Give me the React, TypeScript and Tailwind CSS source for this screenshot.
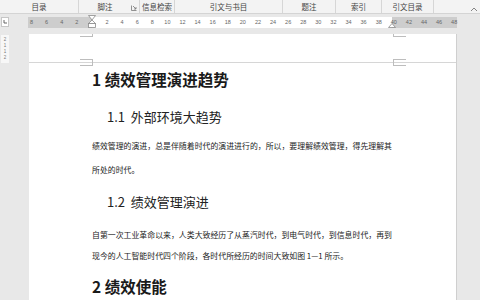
import React from 'react';

const rulerNums = ['8', '6', '4', '2', '', '2', '4', '6', '8', '10', '12', '14', '16', '18', '20', '22', '24', '26', '28', '30', '32', '34', '36', '38', '40', '42', '44', '46', '48'];

const groups = [
    { label: '目录', w: 'w-[79px]' },
    { label: '脚注', w: 'w-[61px]', launcher: true },
    { label: '信息检索', w: 'w-[35px]' },
    { label: '引文与书目', w: 'w-[108px]' },
    { label: '题注', w: 'w-[53px]' },
    { label: '索引', w: 'w-[46px]' },
    { label: '引文目录', w: 'w-[52px]' },
];

export default function App() {
    return (
        <div className="w-[480px] h-[300px] overflow-hidden bg-[#e8e8e8] font-['Noto_Sans_CJK_SC',sans-serif] flex flex-col">
            {/* ribbon group labels */}
            <div className="h-[14px] shrink-0 flex bg-[#f3f3f3] border-b border-[#d4d4d4] text-[7.5px] leading-[13px] text-[#444]">
                {groups.map((g) => (
                    <div key={g.label} className={`${g.w} shrink-0 flex items-center border-r border-[#d6d6d6]`}>
                        <span className="flex-1 text-center">{g.label}</span>
                        {g.launcher && (
                            <svg width="6" height="6" viewBox="0 0 6 6" className="mr-[2px] mt-[2px]">
                                <path d="M0.5 0.5V5.5H5.5" fill="none" stroke="#777" strokeWidth="0.8" />
                                <path d="M2 1L5 4M5 2V4H3" fill="none" stroke="#777" strokeWidth="0.8" />
                            </svg>
                        )}
                    </div>
                ))}
                <div className="flex-1 flex justify-end items-end pr-[2px] pb-[1px]">
                    <svg width="8" height="5" viewBox="0 0 8 5">
                        <path d="M1 4L4 1L7 4" fill="none" stroke="#777" strokeWidth="0.9" />
                    </svg>
                </div>
            </div>

            {/* ruler row */}
            <div className="h-[20px] shrink-0 flex items-start pt-[3px]">
                <div className="ml-[1px] w-[8px] h-[10px] bg-white border border-[#c6c6c6] flex items-center justify-center">
                    <svg width="4" height="4" viewBox="0 0 4 4">
                        <path d="M1 0V3H4" fill="none" stroke="#555" strokeWidth="0.9" />
                    </svg>
                </div>
                <div className="ml-[19px] w-[429px] h-[11px] relative bg-[linear-gradient(to_right,#cdcdcd_64px,#ffffff_64px,#ffffff_364px,#cdcdcd_364px)]">
                    <div className="flex -ml-[4px] font-['Liberation_Sans',sans-serif] text-[5.5px] leading-[11px] text-[#666]">
                        {rulerNums.map((n, i) => (
                            <span key={i} className="w-[15.1px] shrink-0 text-center">
                                {n}
                            </span>
                        ))}
                    </div>
                    {/* first line / hanging indent marker */}
                    <svg className="absolute left-[60px] -top-[2px]" width="8" height="13" viewBox="0 0 8 13">
                        <path d="M0.5 0.5H7.5L4 5Z" fill="#fff" stroke="#8a8a8a" strokeWidth="0.8" />
                        <path d="M4 5L0.5 8.5H7.5Z" fill="#fff" stroke="#8a8a8a" strokeWidth="0.8" />
                        <rect x="0.5" y="8.5" width="7" height="4" fill="#fff" stroke="#8a8a8a" strokeWidth="0.8" />
                    </svg>
                    {/* right indent marker */}
                    <svg className="absolute left-[360px] top-[5px]" width="8" height="6" viewBox="0 0 8 6">
                        <path d="M0.5 5.5L4 1.5L7.5 5.5Z" fill="#fff" stroke="#8a8a8a" strokeWidth="0.8" />
                    </svg>
                </div>
            </div>

            {/* document area */}
            <div className="flex flex-1 min-h-0">
                <div className="w-[29px] shrink-0 pt-[1px]">
                    <div className="ml-[1px] w-[8px] h-[28px] bg-[#f7f7f7] flex flex-col items-center justify-around py-[2px] font-['Liberation_Sans',sans-serif] text-[4.5px] leading-none text-[#777]">
                        <span>2</span>
                        <span>1</span>
                        <span>1</span>
                        <span>2</span>
                    </div>
                </div>
                <div className="w-[428px] shrink-0 bg-white border-r border-[#cfcfcf] relative">
                    {/* margin corner marks */}
                    <div className="absolute left-[51px] top-0 w-[13px] h-[3px] border-b border-r border-[#bdbdbd]" />
                    <div className="absolute left-[364px] top-0 w-[13px] h-[3px] border-b border-l border-[#bdbdbd]" />
                    <div className="absolute left-[51px] top-[25px] w-[13px] h-[7px] border-t border-b border-r border-[#bdbdbd]" />
                    <div className="absolute left-[364px] top-[25px] w-[13px] h-[7px] border-t border-b border-l border-[#bdbdbd]" />

                    <div className="h-[29px] border-b border-[#d6d6d6]" />

                    <div className="pl-[63px] text-[#1a1a1a]">
                        <div className="text-[15.5px] leading-[32px] font-bold whitespace-nowrap">1 绩效管理演进趋势</div>
                        <div className="mt-[12px] pl-[15px] text-[13px] leading-[20px] text-[#222] whitespace-pre">1.1  外部环境大趋势</div>

                        <div className="mt-[7px] w-[300px] text-[7.9px] leading-[24px] text-[#222]">
                            <div className="text-justify [text-align-last:justify] whitespace-nowrap">绩效管理的演进，总是伴随着时代的演进进行的，所以，要理解绩效管理，得先理解其</div>
                            <div className="whitespace-nowrap">所处的时代。</div>
                        </div>

                        <div className="mt-[10px] pl-[15px] text-[13px] leading-[20px] text-[#222] whitespace-pre">1.2  绩效管理演进</div>

                        <div className="mt-[12px] w-[300px] text-[7.9px] leading-[21px] text-[#222]">
                            <div className="text-justify [text-align-last:justify] whitespace-nowrap">自第一次工业革命以来，人类大致经历了从蒸汽时代，到电气时代，到信息时代，再到</div>
                            <div className="whitespace-nowrap">现今的人工智能时代四个阶段，各时代所经历的时间大致如图 1—1 所示。</div>
                        </div>

                        <div className="mt-[4px] text-[15.5px] leading-[32px] font-bold whitespace-nowrap">2 绩效使能</div>
                    </div>
                </div>
            </div>
        </div>
    );
}
